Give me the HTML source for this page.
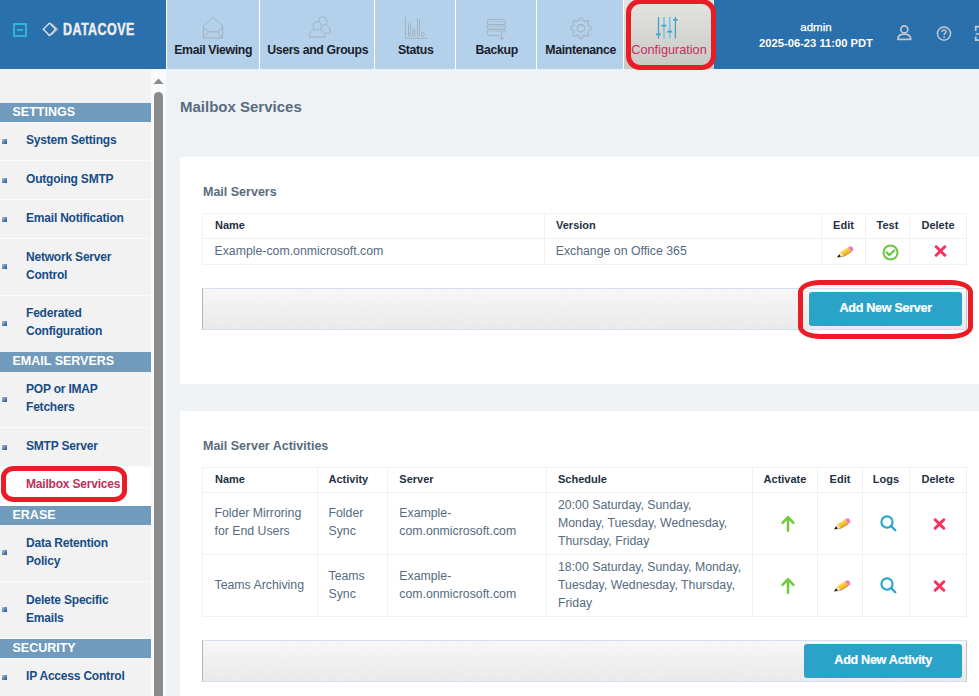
<!DOCTYPE html>
<html><head><meta charset="utf-8">
<style>
*{box-sizing:border-box;margin:0;padding:0}
html,body{width:979px;height:696px;overflow:hidden;background:#eef2f5;font-family:"Liberation Sans",sans-serif;position:relative}
.abs{position:absolute}
#hdr{left:0;top:0;width:979px;height:69px;background:#2a70ac}
.tab{position:absolute;top:0;height:69px;background:#b3d1ea;border-left:1px solid #fff}
.tab .lbl{position:absolute;left:0;right:0;top:43px;text-align:center;font-weight:bold;font-size:12.3px;letter-spacing:-.35px;text-indent:.35px;color:#1c1d2a;line-height:14px;white-space:nowrap}
.tab svg{position:absolute}
#side{left:0;top:69px;width:151px;height:627px;background:#f2f2f2}
#track{left:151px;top:69px;width:15px;height:627px;background:#fafafa}
.bar{position:absolute;left:0;width:151px;height:19px;background:#709bbc;color:#fff;font-weight:bold;font-size:12.5px;line-height:19px;padding-left:12.5px;white-space:nowrap}
.it{position:absolute;left:0;width:151px;border-bottom:1px solid #fbfbfb}
.it .t{position:absolute;left:26px;font-weight:bold;font-size:12px;letter-spacing:-.2px;line-height:18px;color:#174c86;white-space:nowrap}
.it .b{position:absolute;left:2px;width:5px;height:5px;background:linear-gradient(135deg,#a9c4e4,#1f4f8a)}
.panel{position:absolute;left:180px;width:799px;background:#fff}
.ptitle{position:absolute;left:203px;font-weight:bold;font-size:12.3px;color:#5b6f85;white-space:nowrap;line-height:14px}
table{position:absolute;border-collapse:collapse;table-layout:fixed}
td,th{border:1px solid #ececec;font-size:12.5px;color:#5d6a78;text-align:left;vertical-align:middle;padding:0 0 0 12px;line-height:17.5px;font-weight:normal}
th{font-weight:bold;font-size:11px;color:#2a2f3a;height:25px}
.c{text-align:center;padding:0}
.btnbar{position:absolute;left:202px;width:765px;height:42px;border:1px solid #d3deee;border-left:1px solid #b3b3b3;border-right:1px solid #c4c4c4;background:repeating-linear-gradient(135deg,rgba(255,255,255,.16) 0 1.5px,rgba(255,255,255,0) 1.5px 3px),linear-gradient(#f6f6f6,#e8e8e8)}
.btn{position:absolute;background:#2ba3c9;border-radius:3px;color:#fff;font-weight:bold;font-size:12.6px;letter-spacing:-.3px;text-indent:.3px;text-align:center;white-space:nowrap;-webkit-text-stroke:.2px #fff}
.red{position:absolute;border:4px solid #ea1c25;border-radius:12px}
</style></head><body>

<div id="hdr" class="abs">
 <div class="abs" style="left:13px;top:23px;width:14px;height:14px;border:2px solid #2fb3d8"></div>
 <div class="abs" style="left:17px;top:29px;width:6px;height:2px;background:#2fb3d8"></div>
 <svg class="abs" style="left:40px;top:20px" width="20" height="18" viewBox="0 0 20 18">
  <path d="M11.3 3.3 L17.6 9.3 L11.3 15.2" fill="none" stroke="#b9b2a4" stroke-width="1.1"/>
  <path d="M9.5 3.1 L15.7 9.3 L9.5 15.5 L3.3 9.3 Z" fill="none" stroke="#e4eaef" stroke-width="1.3"/>
 </svg>
 <div class="abs" style="left:63px;top:21px;font-weight:bold;font-size:15.6px;line-height:18px;color:#eeeeee;transform:scaleX(.8);transform-origin:0 0;letter-spacing:.55px;-webkit-text-stroke:.45px #eeeeee">DATACOVE</div>
 <div class="abs" style="left:716px;top:20px;width:200px;text-align:center;color:#fff;font-size:11.5px;line-height:14px;-webkit-text-stroke:.25px #fff">admin</div>
 <div class="abs" style="left:716px;top:35.6px;width:200px;text-align:center;color:#fff;font-size:11.2px;font-weight:bold;line-height:14px">2025-06-23 11:00 PDT</div>
 <svg class="abs" style="left:896px;top:24px" width="17" height="18" viewBox="0 0 17 18">
  <circle cx="8.3" cy="5.4" r="3.5" fill="none" stroke="#c6c8cb" stroke-width="1.6"/>
  <path d="M1.8 15.4 C1.8 12 4.6 10.1 8.3 10.1 C12 10.1 14.8 12 14.8 15.4 Z" fill="none" stroke="#c6c8cb" stroke-width="1.6" stroke-linejoin="round"/>
 </svg>
 <svg class="abs" style="left:935px;top:25px" width="18" height="18" viewBox="0 0 18 18">
  <circle cx="9" cy="8.6" r="6.6" fill="none" stroke="#c6c8cb" stroke-width="1.5"/>
  <path d="M7 6.9 C7 5.5 8 4.9 9 4.9 C10.2 4.9 11 5.7 11 6.7 C11 8.2 9.1 8.3 9.1 10.1" fill="none" stroke="#c6c8cb" stroke-width="1.5"/>
  <rect x="8.3" y="11.3" width="1.6" height="1.6" fill="#c6c8cb"/>
 </svg>
 <svg class="abs" style="left:973px;top:25px" width="6" height="18" viewBox="0 0 6 18">
  <path d="M7 1.7 H2.7 V6.1 M2.7 11.4 V15.1 H7 M2.7 9 H7" fill="none" stroke="#c9c9c9" stroke-width="1.7"/>
 </svg>
</div>
<div class="tab" style="left:166px;width:93px">
 <svg style="left:35px;top:16px" width="23" height="24" viewBox="0 0 23 24">
  <path d="M1.5 9.6 L11 1.3 L20.6 9.6 V22 H1.5 Z" fill="none" stroke="#a6b2bf" stroke-width="1"/>
  <path d="M1.5 11.5 L6.8 15.8 H15.3 L20.6 11.5 M1.5 22 L6.8 15.8 M20.6 22 L15.3 15.8" fill="none" stroke="#a6b2bf" stroke-width="1"/>
 </svg>
 <div class="lbl">Email Viewing</div>
</div>
<div class="tab" style="left:259px;width:116px">
 <svg style="left:49px;top:16px" width="24" height="23" viewBox="0 0 24 23">
  <g fill="none" stroke="#a6b2bf" stroke-width="1">
  <circle cx="13.8" cy="5.1" r="4.1"/>
  <path d="M16.6 8.6 C19.6 9.6 21.25 12.2 21.25 15 V17.1 H16.6"/>
  <circle cx="8.3" cy="9.9" r="4.1" fill="#b3d1ea"/>
  <path d="M5.5 13.4 C2.4 14.4 0.5 17 0.5 19.8 V21.1 H16 V19.8 C16 17 14.1 14.4 11.1 13.4"/>
  </g>
 </svg>
 <div class="lbl">Users and Groups</div>
</div>
<div class="tab" style="left:374px;width:82px">
 <svg style="left:29px;top:16px" width="24" height="24" viewBox="0 0 24 24">
  <path d="M1.4 1.2 V22.3 H23.2" fill="none" stroke="#a6b2bf" stroke-width="1"/>
  <g fill="none" stroke="#a6b2bf" stroke-width="1">
  <rect x="4.5" y="7.5" width="1.8" height="12.8" rx=".9"/>
  <rect x="8.8" y="13.1" width="2" height="7.2" rx="1"/>
  <rect x="13.5" y="3.2" width="2" height="17.1" rx="1"/>
  <rect x="17.6" y="16.3" width="2.7" height="4" rx="1.35"/>
  </g>
 </svg>
 <div class="lbl">Status</div>
</div>
<div class="tab" style="left:455px;width:82px">
 <svg style="left:30px;top:18px" width="22" height="23" viewBox="0 0 22 23">
  <g fill="none" stroke="#a4b1bd" stroke-width="1">
  <rect x="1.2" y="1.4" width="18.5" height="5.2" rx="2.6"/>
  <rect x="1.2" y="6.6" width="18.5" height="4.7" rx="2.4"/>
  <rect x="1.2" y="11.3" width="18.5" height="6.3" rx="2.6"/>
  <path d="M3 3.6 H18 M3 8.6 H18 M3 13.4 H18" stroke-width=".7" opacity=".7"/>
  </g>
  <rect x="13.6" y="15" width="7" height="5" fill="#b3d1ea"/>
  <path d="M15.6 13.4 V21.6 M13.3 19.4 L15.6 21.6 L17.9 19.4" fill="none" stroke="#a4b1bd" stroke-width="1"/>
 </svg>
 <div class="lbl">Backup</div>
</div>
<div class="tab" style="left:536px;width:88px">
 <svg style="left:32px;top:17px" width="24" height="24" viewBox="0 0 24 24"><g fill="none" stroke="#a4b1bd" stroke-width="1.1" stroke-linejoin="round"><path d="M22.20 11.30 L22.19 10.76 L22.14 10.22 L21.35 9.80 L19.98 9.58 L19.63 9.23 L19.51 8.83 L19.37 8.43 L19.21 8.05 L19.03 7.67 L18.83 7.30 L18.83 6.80 L19.64 5.67 L19.90 4.82 L19.55 4.41 L19.18 4.02 L18.79 3.65 L18.38 3.30 L17.53 3.56 L16.40 4.37 L15.90 4.37 L15.53 4.17 L15.15 3.99 L14.77 3.83 L14.37 3.69 L13.97 3.57 L13.62 3.22 L13.40 1.85 L12.98 1.06 L12.44 1.01 L11.90 1.00 L11.36 1.01 L10.82 1.06 L10.40 1.85 L10.18 3.22 L9.83 3.57 L9.43 3.69 L9.03 3.83 L8.65 3.99 L8.27 4.17 L7.90 4.37 L7.40 4.37 L6.27 3.56 L5.42 3.30 L5.01 3.65 L4.62 4.02 L4.25 4.41 L3.90 4.82 L4.16 5.67 L4.97 6.80 L4.97 7.30 L4.77 7.67 L4.59 8.05 L4.43 8.43 L4.29 8.83 L4.17 9.23 L3.82 9.58 L2.45 9.80 L1.66 10.22 L1.61 10.76 L1.60 11.30 L1.61 11.84 L1.66 12.38 L2.45 12.80 L3.82 13.02 L4.17 13.37 L4.29 13.77 L4.43 14.17 L4.59 14.55 L4.77 14.93 L4.97 15.30 L4.97 15.80 L4.16 16.93 L3.90 17.78 L4.25 18.19 L4.62 18.58 L5.01 18.95 L5.42 19.30 L6.27 19.04 L7.40 18.23 L7.90 18.23 L8.27 18.43 L8.65 18.61 L9.03 18.77 L9.43 18.91 L9.83 19.03 L10.18 19.38 L10.40 20.75 L10.82 21.54 L11.36 21.59 L11.90 21.60 L12.44 21.59 L12.98 21.54 L13.40 20.75 L13.62 19.38 L13.97 19.03 L14.37 18.91 L14.77 18.77 L15.15 18.61 L15.53 18.43 L15.90 18.23 L16.40 18.23 L17.53 19.04 L18.38 19.30 L18.79 18.95 L19.18 18.58 L19.55 18.19 L19.90 17.78 L19.64 16.93 L18.83 15.80 L18.83 15.30 L19.03 14.93 L19.21 14.55 L19.37 14.17 L19.51 13.77 L19.63 13.37 L19.98 13.02 L21.35 12.80 L22.14 12.38 L22.19 11.84 Z"/><circle cx="11.9" cy="11.3" r="3.7"/></g></svg>
 <div class="lbl">Maintenance</div>
</div>
<div class="tab" style="left:623px;width:91px;background:linear-gradient(#e4e4e0,#c8c8c6)">
 <svg style="left:32px;top:16px" width="24" height="24" viewBox="0 0 24 24">
  <path d="M2.5 1 V22.5 M19.4 1 V22.5" stroke="#2fa3cf" stroke-width="1.2"/>
  <path d="M8 1 V22.5 M13.8 1 V22.5" stroke="#7fc4dd" stroke-width="1.7"/>
  <path d="M0 18.4 H5 M5.4 9.6 H10.4 M11.2 15.6 H16.2 M17 3.8 H21.8" stroke="#3aa6cf" stroke-width="1.6"/>
 </svg>
 <div class="lbl" style="font-weight:normal;font-size:12.7px;letter-spacing:0;text-indent:0;color:#c2305c">Configuration</div>
</div>
<div class="red" style="left:626px;top:-1.5px;width:90px;height:71px;border-width:5px;border-radius:14px"></div>
<!--CONTENT-->
<div class="abs" style="left:180.0px;top:97.8px;font-size:15.0px;line-height:18.0px;color:#5a6c80;font-weight:bold;white-space:nowrap;">Mailbox Services</div>
<div class="abs" style="left:180px;top:157px;width:799px;height:227px;background:#fff"></div>
<div class="abs" style="left:203.0px;top:184.8px;font-size:12.5px;line-height:15.0px;color:#5a6c80;font-weight:bold;white-space:nowrap;">Mail Servers</div>
<div class="abs" style="left:202px;top:213px;width:1px;height:52px;background:#f1f1f1"></div>
<div class="abs" style="left:544px;top:213px;width:1px;height:52px;background:#f1f1f1"></div>
<div class="abs" style="left:821px;top:213px;width:1px;height:52px;background:#f1f1f1"></div>
<div class="abs" style="left:865px;top:213px;width:1px;height:52px;background:#f1f1f1"></div>
<div class="abs" style="left:909px;top:213px;width:1px;height:52px;background:#f1f1f1"></div>
<div class="abs" style="left:966px;top:213px;width:1px;height:52px;background:#f1f1f1"></div>
<div class="abs" style="left:202px;top:213px;width:765px;height:1px;background:#f1f1f1"></div>
<div class="abs" style="left:202px;top:238px;width:765px;height:1px;background:#f1f1f1"></div>
<div class="abs" style="left:202px;top:264px;width:765px;height:1px;background:#f1f1f1"></div>
<div class="abs" style="left:215.0px;top:218.3px;font-size:11.0px;line-height:14.0px;color:#263042;font-weight:bold;white-space:nowrap;">Name</div>
<div class="abs" style="left:556.0px;top:218.3px;font-size:11.0px;line-height:14.0px;color:#263042;font-weight:bold;white-space:nowrap;">Version</div>
<div class="abs" style="left:822.0px;width:43.0px;text-align:center;top:218.3px;font-size:11.0px;line-height:14.0px;color:#263042;font-weight:bold;white-space:nowrap;">Edit</div>
<div class="abs" style="left:866.0px;width:43.0px;text-align:center;top:218.3px;font-size:11.0px;line-height:14.0px;color:#263042;font-weight:bold;white-space:nowrap;">Test</div>
<div class="abs" style="left:910.0px;width:56.0px;text-align:center;top:218.3px;font-size:11.0px;line-height:14.0px;color:#263042;font-weight:bold;white-space:nowrap;">Delete</div>
<div class="abs" style="left:214.5px;top:243.6px;font-size:12.3px;line-height:15.0px;color:#566b80;white-space:nowrap;">Example-com.onmicrosoft.com</div>
<div class="abs" style="left:555.7px;top:243.6px;font-size:12.3px;line-height:15.0px;color:#566b80;white-space:nowrap;">Exchange on Office 365</div>
<div class="abs" style="left:835.5px;top:245.3px;width:19px;height:13px;line-height:0"><svg width="19" height="13" viewBox="0 0 19 13"><g transform="translate(1.2 12.2) rotate(-31)"><path d="M0 0 L6 -2.7 H14.6 V2.7 H6 Z" fill="#f8c62a"/><path d="M6 -2.7 H14.6 V-1.3 H6 Z" fill="#fcd85a"/><path d="M6 1.3 H14.6 V2.7 H6 Z" fill="#eaa91c"/><path d="M0 0 L6 -2.7 V2.7 Z" fill="#f8dcc4"/><path d="M0 0 L3.2 -1.45 V1.45 Z" fill="#111"/><path d="M14.4 -2.7 H16.4 C17.6 -2.7 18.2 -1.5 18.2 0 C18.2 1.5 17.6 2.7 16.4 2.7 H14.4 Z" fill="#f27cc4"/><path d="M0 0.2 L6 2.7 H14.6" fill="none" stroke="#4a3a1a" stroke-width=".5" opacity=".5"/></g></svg></div>
<div class="abs" style="left:881.5px;top:243.5px;width:17px;height:17px;line-height:0"><svg width="17" height="17" viewBox="0 0 17 17"><circle cx="8.5" cy="8.5" r="7" fill="none" stroke="#6cc644" stroke-width="2"/><path d="M4.6 8.4 L7.3 11.1 L12.2 6.5" fill="none" stroke="#6cc644" stroke-width="2.2" stroke-linecap="round" stroke-linejoin="round"/></svg></div>
<div class="abs" style="left:933.6px;top:245.4px;width:13px;height:12px;line-height:0"><svg width="13" height="12" viewBox="0 0 13 12"><path d="M2.2 1.8 L10.8 10.2 M10.8 1.8 L2.2 10.2" stroke="#f5325c" stroke-width="3" stroke-linecap="round"/></svg></div>
<div class="btnbar" style="top:288px"></div>
<div class="btn" style="left:809px;top:292px;width:153px;height:34px;line-height:32px">Add New Server</div>
<div class="red" style="left:797.5px;top:279.5px;width:175.5px;height:59.5px;border-width:5px;border-radius:22px / 12px"></div>
<div class="abs" style="left:180px;top:411px;width:799px;height:285px;background:#fff"></div>
<div class="abs" style="left:203.0px;top:438.8px;font-size:12.5px;line-height:15.0px;color:#5a6c80;font-weight:bold;white-space:nowrap;">Mail Server Activities</div>
<div class="abs" style="left:202px;top:467px;width:1px;height:150px;background:#f1f1f1"></div>
<div class="abs" style="left:317px;top:467px;width:1px;height:150px;background:#f1f1f1"></div>
<div class="abs" style="left:387px;top:467px;width:1px;height:150px;background:#f1f1f1"></div>
<div class="abs" style="left:546px;top:467px;width:1px;height:150px;background:#f1f1f1"></div>
<div class="abs" style="left:752px;top:467px;width:1px;height:150px;background:#f1f1f1"></div>
<div class="abs" style="left:817px;top:467px;width:1px;height:150px;background:#f1f1f1"></div>
<div class="abs" style="left:862px;top:467px;width:1px;height:150px;background:#f1f1f1"></div>
<div class="abs" style="left:909px;top:467px;width:1px;height:150px;background:#f1f1f1"></div>
<div class="abs" style="left:966px;top:467px;width:1px;height:150px;background:#f1f1f1"></div>
<div class="abs" style="left:202px;top:467px;width:765px;height:1px;background:#f1f1f1"></div>
<div class="abs" style="left:202px;top:492px;width:765px;height:1px;background:#f1f1f1"></div>
<div class="abs" style="left:202px;top:554px;width:765px;height:1px;background:#f1f1f1"></div>
<div class="abs" style="left:202px;top:616px;width:765px;height:1px;background:#f1f1f1"></div>
<div class="abs" style="left:215.0px;top:472.3px;font-size:11.0px;line-height:14.0px;color:#263042;font-weight:bold;white-space:nowrap;">Name</div>
<div class="abs" style="left:328.5px;top:472.3px;font-size:11.0px;line-height:14.0px;color:#263042;font-weight:bold;white-space:nowrap;">Activity</div>
<div class="abs" style="left:399.3px;top:472.3px;font-size:11.0px;line-height:14.0px;color:#263042;font-weight:bold;white-space:nowrap;">Server</div>
<div class="abs" style="left:558.0px;top:472.3px;font-size:11.0px;line-height:14.0px;color:#263042;font-weight:bold;white-space:nowrap;">Schedule</div>
<div class="abs" style="left:753.0px;width:64.0px;text-align:center;top:472.3px;font-size:11.0px;line-height:14.0px;color:#263042;font-weight:bold;white-space:nowrap;">Activate</div>
<div class="abs" style="left:818.0px;width:44.0px;text-align:center;top:472.3px;font-size:11.0px;line-height:14.0px;color:#263042;font-weight:bold;white-space:nowrap;">Edit</div>
<div class="abs" style="left:863.0px;width:46.0px;text-align:center;top:472.3px;font-size:11.0px;line-height:14.0px;color:#263042;font-weight:bold;white-space:nowrap;">Logs</div>
<div class="abs" style="left:910.0px;width:56.0px;text-align:center;top:472.3px;font-size:11.0px;line-height:14.0px;color:#263042;font-weight:bold;white-space:nowrap;">Delete</div>
<div class="abs" style="left:214.5px;top:506.2px;font-size:12.3px;line-height:15.0px;color:#566b80;white-space:nowrap;">Folder Mirroring</div>
<div class="abs" style="left:214.5px;top:524.2px;font-size:12.3px;line-height:15.0px;color:#566b80;white-space:nowrap;">for End Users</div>
<div class="abs" style="left:328.5px;top:506.2px;font-size:12.3px;line-height:15.0px;color:#566b80;white-space:nowrap;">Folder</div>
<div class="abs" style="left:328.5px;top:524.2px;font-size:12.3px;line-height:15.0px;color:#566b80;white-space:nowrap;">Sync</div>
<div class="abs" style="left:399.3px;top:506.2px;font-size:12.3px;line-height:15.0px;color:#566b80;white-space:nowrap;">Example-</div>
<div class="abs" style="left:399.3px;top:524.2px;font-size:12.3px;line-height:15.0px;color:#566b80;white-space:nowrap;">com.onmicrosoft.com</div>
<div class="abs" style="left:558.0px;top:497.5px;font-size:12.3px;line-height:15.0px;color:#566b80;white-space:nowrap;">20:00 Saturday, Sunday,</div>
<div class="abs" style="left:558.0px;top:515.5px;font-size:12.3px;line-height:15.0px;color:#566b80;white-space:nowrap;">Monday, Tuesday, Wednesday,</div>
<div class="abs" style="left:558.0px;top:533.5px;font-size:12.3px;line-height:15.0px;color:#566b80;white-space:nowrap;">Thursday, Friday</div>
<div class="abs" style="left:214.5px;top:578.2px;font-size:12.3px;line-height:15.0px;color:#566b80;white-space:nowrap;">Teams Archiving</div>
<div class="abs" style="left:328.5px;top:568.5px;font-size:12.3px;line-height:15.0px;color:#566b80;white-space:nowrap;">Teams</div>
<div class="abs" style="left:328.5px;top:586.5px;font-size:12.3px;line-height:15.0px;color:#566b80;white-space:nowrap;">Sync</div>
<div class="abs" style="left:399.3px;top:568.5px;font-size:12.3px;line-height:15.0px;color:#566b80;white-space:nowrap;">Example-</div>
<div class="abs" style="left:399.3px;top:586.5px;font-size:12.3px;line-height:15.0px;color:#566b80;white-space:nowrap;">com.onmicrosoft.com</div>
<div class="abs" style="left:558.0px;top:559.5px;font-size:12.3px;line-height:15.0px;color:#566b80;white-space:nowrap;">18:00 Saturday, Sunday, Monday,</div>
<div class="abs" style="left:558.0px;top:577.5px;font-size:12.3px;line-height:15.0px;color:#566b80;white-space:nowrap;">Tuesday, Wednesday, Thursday,</div>
<div class="abs" style="left:558.0px;top:595.5px;font-size:12.3px;line-height:15.0px;color:#566b80;white-space:nowrap;">Friday</div>
<div class="abs" style="left:780.5px;top:515.0px;width:14px;height:17px;line-height:0"><svg width="14" height="17" viewBox="0 0 14 17"><path d="M7 15.8 V2.5 M1.6 7.8 L7 2.2 L12.4 7.8" fill="none" stroke="#6fcb3e" stroke-width="2.5" stroke-linecap="round" stroke-linejoin="round"/></svg></div>
<div class="abs" style="left:832.5px;top:517.0px;width:19px;height:13px;line-height:0"><svg width="19" height="13" viewBox="0 0 19 13"><g transform="translate(1.2 12.2) rotate(-31)"><path d="M0 0 L6 -2.7 H14.6 V2.7 H6 Z" fill="#f8c62a"/><path d="M6 -2.7 H14.6 V-1.3 H6 Z" fill="#fcd85a"/><path d="M6 1.3 H14.6 V2.7 H6 Z" fill="#eaa91c"/><path d="M0 0 L6 -2.7 V2.7 Z" fill="#f8dcc4"/><path d="M0 0 L3.2 -1.45 V1.45 Z" fill="#111"/><path d="M14.4 -2.7 H16.4 C17.6 -2.7 18.2 -1.5 18.2 0 C18.2 1.5 17.6 2.7 16.4 2.7 H14.4 Z" fill="#f27cc4"/><path d="M0 0.2 L6 2.7 H14.6" fill="none" stroke="#4a3a1a" stroke-width=".5" opacity=".5"/></g></svg></div>
<div class="abs" style="left:879.5px;top:515.0px;width:17px;height:17px;line-height:0"><svg width="17" height="17" viewBox="0 0 17 17"><circle cx="7" cy="7" r="5.6" fill="none" stroke="#2aa3cf" stroke-width="2.1"/><path d="M11 11 L15.3 15.3" stroke="#2aa3cf" stroke-width="2.3" stroke-linecap="round"/></svg></div>
<div class="abs" style="left:932.5px;top:517.5px;width:13px;height:12px;line-height:0"><svg width="13" height="12" viewBox="0 0 13 12"><path d="M2.2 1.8 L10.8 10.2 M10.8 1.8 L2.2 10.2" stroke="#f5325c" stroke-width="3" stroke-linecap="round"/></svg></div>
<div class="abs" style="left:780.5px;top:577.0px;width:14px;height:17px;line-height:0"><svg width="14" height="17" viewBox="0 0 14 17"><path d="M7 15.8 V2.5 M1.6 7.8 L7 2.2 L12.4 7.8" fill="none" stroke="#6fcb3e" stroke-width="2.5" stroke-linecap="round" stroke-linejoin="round"/></svg></div>
<div class="abs" style="left:832.5px;top:579.0px;width:19px;height:13px;line-height:0"><svg width="19" height="13" viewBox="0 0 19 13"><g transform="translate(1.2 12.2) rotate(-31)"><path d="M0 0 L6 -2.7 H14.6 V2.7 H6 Z" fill="#f8c62a"/><path d="M6 -2.7 H14.6 V-1.3 H6 Z" fill="#fcd85a"/><path d="M6 1.3 H14.6 V2.7 H6 Z" fill="#eaa91c"/><path d="M0 0 L6 -2.7 V2.7 Z" fill="#f8dcc4"/><path d="M0 0 L3.2 -1.45 V1.45 Z" fill="#111"/><path d="M14.4 -2.7 H16.4 C17.6 -2.7 18.2 -1.5 18.2 0 C18.2 1.5 17.6 2.7 16.4 2.7 H14.4 Z" fill="#f27cc4"/><path d="M0 0.2 L6 2.7 H14.6" fill="none" stroke="#4a3a1a" stroke-width=".5" opacity=".5"/></g></svg></div>
<div class="abs" style="left:879.5px;top:577.0px;width:17px;height:17px;line-height:0"><svg width="17" height="17" viewBox="0 0 17 17"><circle cx="7" cy="7" r="5.6" fill="none" stroke="#2aa3cf" stroke-width="2.1"/><path d="M11 11 L15.3 15.3" stroke="#2aa3cf" stroke-width="2.3" stroke-linecap="round"/></svg></div>
<div class="abs" style="left:932.5px;top:579.5px;width:13px;height:12px;line-height:0"><svg width="13" height="12" viewBox="0 0 13 12"><path d="M2.2 1.8 L10.8 10.2 M10.8 1.8 L2.2 10.2" stroke="#f5325c" stroke-width="3" stroke-linecap="round"/></svg></div>
<div class="btnbar" style="top:640px"></div>
<div class="btn" style="left:804px;top:644px;width:158px;height:34px;line-height:32px">Add New Activity</div>
<!--/CONTENT-->
<div id="side" class="abs"></div>
<div id="track" class="abs"></div>
<div class="bar" style="top:103px;height:19px;line-height:19px">SETTINGS</div>
<div class="it" style="top:122px;height:39px"><div class="b" style="top:17px"></div><div class="t" style="top:9.0px">System Settings</div></div>
<div class="it" style="top:161px;height:39px"><div class="b" style="top:17px"></div><div class="t" style="top:9.0px">Outgoing SMTP</div></div>
<div class="it" style="top:200px;height:39px"><div class="b" style="top:17px"></div><div class="t" style="top:9.0px">Email Notification</div></div>
<div class="it" style="top:239px;height:57px"><div class="b" style="top:25px"></div><div class="t" style="top:9.0px">Network Server<br>Control</div></div>
<div class="it" style="top:296px;height:57px"><div class="b" style="top:25px"></div><div class="t" style="top:8px">Federated<br>Configuration</div></div>
<div class="bar" style="top:352px;height:20px;line-height:19px">EMAIL SERVERS</div>
<div class="it" style="top:372px;height:56px"><div class="b" style="top:25px"></div><div class="t" style="top:7.7px">POP or IMAP<br>Fetchers</div></div>
<div class="it" style="top:428px;height:39px"><div class="b" style="top:17px"></div><div class="t" style="top:8.7px">SMTP Server</div></div>
<div class="it" style="top:467px;height:39px;background:#fff;border-bottom:none"><div class="t" style="top:8.4px;color:#c0305a">Mailbox Services</div></div>
<div class="bar" style="top:506px;height:19px;line-height:19px">ERASE</div>
<div class="it" style="top:525px;height:57px"><div class="b" style="top:25px"></div><div class="t" style="top:9.0px">Data Retention<br>Policy</div></div>
<div class="it" style="top:582px;height:57px"><div class="b" style="top:25px"></div><div class="t" style="top:9.2px">Delete Specific<br>Emails</div></div>
<div class="bar" style="top:639px;height:19px;line-height:19px">SECURITY</div>
<div class="it" style="top:658px;height:39px"><div class="b" style="top:17px"></div><div class="t" style="top:9.0px">IP Access Control</div></div>
<div class="red" style="left:1px;top:466px;width:126px;height:36px;border-width:5px;border-radius:13px / 11px"></div>
<svg class="abs" style="left:153px;top:77px" width="11" height="8" viewBox="0 0 11 8"><path d="M0.5 7 L5.5 1.5 L10.5 7 Z" fill="#8b8b8b"/></svg>
<div class="abs" style="left:154px;top:92px;width:9px;height:620px;border-radius:4.5px;background:#8b8b8b"></div>
</body></html>
